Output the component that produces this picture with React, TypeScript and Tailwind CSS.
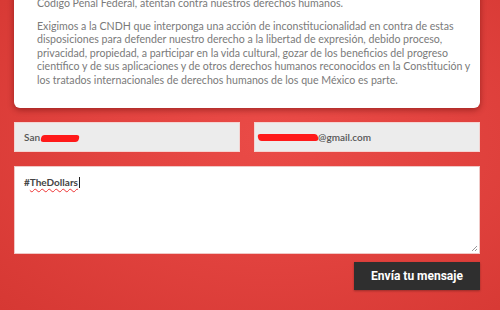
import React from "react";

export default function App() {
  return (
    <div
      className="w-[500px] h-[310px] overflow-hidden pl-[14px] pr-[20px] flex flex-col"
      style={{
        background:
          "radial-gradient(ellipse at 55% 45%, #ea4b47 0%, #e2433f 45%, #d63833 100%)",
      }}
    >
      <div
        className="-mt-[24px] bg-white rounded-[6px] pt-[21px] pb-[21px] pl-[23px] pr-[20px] shadow-[0_2px_6px_rgba(80,0,0,0.45)] text-[#7a7a7a] text-[10.6px] leading-[13.5px] whitespace-nowrap"
        style={{ fontFamily: "Lato, 'Open Sans', sans-serif" }}
      >
        <p>Código Penal Federal, atentan contra nuestros derechos humanos.</p>
        <p className="mt-[9px]">
          Exigimos a la CNDH que interponga una acción de inconstitucionalidad en contra de estas
          <br />
          disposiciones para defender nuestro derecho a la libertad de expresión, debido proceso,
          <br />
          privacidad, propiedad, a participar en la vida cultural, gozar de los beneficios del progreso
          <br />
          científico y de sus aplicaciones y de otros derechos humanos reconocidos en la Constitución y
          <br />
          los tratados internacionales de derechos humanos de los que México es parte.
        </p>
      </div>

      <div
        className="mt-[14px] grid grid-cols-2 gap-[14px] text-[10px] text-[#555]"
        style={{ fontFamily: "Lato, 'Open Sans', sans-serif" }}
      >
        <div className="h-[30px] bg-[#ececec] border border-[#f4d4d2] flex items-center pl-[9px]">
          <span className="font-semibold">San</span>
          <span className="ml-[1px] mt-[2px] w-[38px] h-[7px] bg-[#ff1a1a] rounded-[3px] -skew-x-12" />
        </div>
        <div className="h-[30px] bg-[#ececec] border border-[#f4d4d2] flex items-center pl-[3px]">
          <span className="w-[60px] h-[7px] bg-[#ff1a1a] rounded-[3px] skew-x-12" />
          <span className="font-semibold">@gmail.com</span>
        </div>
      </div>

      <div
        className="mt-[14px] relative h-[88px] bg-white border border-[#f0c8c6] pl-[9px] pt-[8px] text-[10px] leading-[14px] font-bold text-[#444]"
        style={{ fontFamily: "Lato, 'Open Sans', sans-serif" }}
      >
        <div className="flex items-center">
          <span>#</span>
          <span className="underline decoration-wavy decoration-[#e33] underline-offset-2">TheDollars</span>
          <span className="w-[1px] h-[11px] bg-[#222] ml-[1px]" />
        </div>
        <svg className="absolute right-[1px] bottom-[1px]" width="8" height="8" viewBox="0 0 8 8">
          <path d="M7 2 L2 7 M7 5 L5 7" stroke="#999" strokeWidth="1" />
        </svg>
      </div>

      <div className="mt-[8px] flex justify-end">
        <button
          className="h-[28px] w-[126px] bg-[#2f2f2f] text-white text-[12px] font-bold flex items-center justify-center shadow-[0_1px_2px_rgba(0,0,0,0.3)]"
          style={{ fontFamily: "Roboto, 'Open Sans', sans-serif" }}
        >
          Envía tu mensaje
        </button>
      </div>
    </div>
  );
}
